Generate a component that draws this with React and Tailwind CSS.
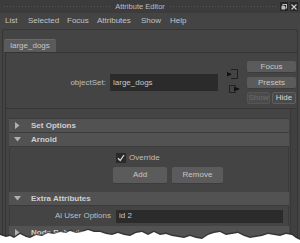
import React from "react";

const menuItems = [
  { name: "List", w: "w-[23px]" },
  { name: "Selected", w: "w-[39px]" },
  { name: "Focus", w: "w-[30px]" },
  { name: "Attributes", w: "w-[44px]" },
  { name: "Show", w: "w-[29px]" },
  { name: "Help", w: "w-[20px]" },
];

function Arrow({ open }) {
  return open ? (
    <svg width="7" height="5" viewBox="0 0 7 5" className="ml-[5px] mr-[10px]">
      <polygon points="0,0 7,0 3.5,4.5" fill="#b0b0b0" />
    </svg>
  ) : (
    <svg width="5" height="7" viewBox="0 0 5 7" className="ml-[6px] mr-[11px]">
      <polygon points="0,0 4.5,3.5 0,7" fill="#b0b0b0" />
    </svg>
  );
}

function Header({ title, open }) {
  return (
    <div className="flex h-[14px] items-center bg-[#525252] border-b border-[#3a3a3a]">
      <Arrow open={open} />
      <span className="text-[8px] font-bold text-[#cfcfcf] leading-none">{title}</span>
    </div>
  );
}

function Btn({ children, className }) {
  return (
    <div
      className={
        "flex items-center justify-center rounded-[2px] bg-[#5b5b5b] border-b border-[#3c3c3c] text-[8px] text-[#c6c6c6] leading-none " +
        className
      }
    >
      {children}
    </div>
  );
}

export default function App() {
  return (
    <div className="relative w-[300px] h-[243px] overflow-hidden bg-[#444444] font-['Liberation_Sans',sans-serif] flex flex-col">
      {/* title bar */}
      <div className="h-[13px] flex items-center bg-[#3c3c3c] pl-[3px] pr-[2px]">
        <div className="flex-1 h-[4px] bg-[radial-gradient(#575757_0.8px,transparent_0.9px)] bg-[length:3px_3px]" />
        <span className="px-[4px] text-[7.5px] text-[#bcbcbc] leading-none">Attribute Editor</span>
        <div className="flex-1 h-[4px] bg-[radial-gradient(#575757_0.8px,transparent_0.9px)] bg-[length:3px_3px] mr-[3px]" />
        <div className="w-[8px] h-[9px] bg-[#262626] flex items-center justify-center mr-[2px]">
          <svg width="6" height="6" viewBox="0 0 6 6">
            <rect x="2" y="0.5" width="3.5" height="3.5" fill="none" stroke="#bbb" strokeWidth="1" />
            <rect x="0.5" y="2" width="3.5" height="3.5" fill="#bbb" />
          </svg>
        </div>
        <div className="w-[8px] h-[9px] bg-[#262626] flex items-center justify-center">
          <svg width="6" height="6" viewBox="0 0 6 6">
            <path d="M0.5 0.5 L5.5 5.5 M5.5 0.5 L0.5 5.5" stroke="#ccc" strokeWidth="1.2" />
          </svg>
        </div>
      </div>

      {/* menu bar */}
      <div className="h-[16px] flex items-center pl-[5px] text-[8px] text-[#c2c2c2] leading-none">
        {menuItems.map((m) => (
          <span key={m.name} className={m.w}>
            {m.name}
          </span>
        ))}
      </div>

      {/* main frame */}
      <div className="flex-1 px-[2px] flex flex-col">
        <div className="flex-1 flex flex-col border-l border-t border-r border-[#363636] rounded-t-[3px]">
          {/* tab row */}
          <div className="h-[22px] flex items-end pl-[1px]">
            <div className="w-[52px] h-[13px] bg-[#5a5a5a] rounded-t-[2px] border-t border-[#676767] flex items-center justify-center text-[8px] text-[#c4c4c4] leading-none">
              large_dogs
            </div>
          </div>

          <div className="flex-1 flex flex-col ml-[2px] border-l border-t border-[#343434]">
            {/* objectSet area */}
            <div className="h-[56px] flex items-start border-b border-[#363636]">
              <div className="mt-[21px] flex items-center">
                <span className="w-[100px] text-right text-[8px] text-[#bfbfbf] leading-none">objectSet:</span>
                <div className="ml-[4px] w-[108px] h-[17px] bg-[#2b2b2b] flex items-center pl-[3px] text-[8px] text-[#c8c8c8] leading-none">
                  large_dogs
                </div>
              </div>
              <div className="ml-[9px] mt-[16px] flex flex-col w-[13px]">
                <svg width="11" height="10" viewBox="0 0 11 10">
                  <path d="M4 0.5 H10.5 V9.5 H4" fill="none" stroke="#202020" strokeWidth="1" />
                  <polygon points="0,3 5,5.2 0,7.5" fill="#111" />
                </svg>
                <svg width="12" height="8" viewBox="0 0 12 8" className="mt-[6px] ml-[2px]">
                  <path d="M7 0.5 H0.5 V7.5 H7" fill="none" stroke="#202020" strokeWidth="1" />
                  <polygon points="5,1.5 11,4 5,6.5" fill="#111" />
                </svg>
              </div>
              <div className="ml-[7px] mt-[8px] w-[49px] flex flex-col">
                <Btn className="h-[12px]">Focus</Btn>
                <Btn className="h-[12px] mt-[4px]">Presets</Btn>
                <div className="flex mt-[3px] gap-[2px]">
                  <div className="w-[23px] h-[12px] rounded-[2px] bg-[#4b4b4b] border border-[#555] flex items-center justify-center text-[8px] text-[#6c6c6c] leading-none">
                    Show
                  </div>
                  <div className="w-[24px] h-[12px] rounded-[2px] bg-[#4a4a4a] border border-[#5e5e5e] flex items-center justify-center text-[8px] text-[#d6d6d6] leading-none">
                    Hide
                  </div>
                </div>
              </div>
            </div>

            {/* sections */}
            <div className="flex-1 flex">
              <div className="flex-1 pl-[3px] pt-[9px] flex flex-col">
                <div className="border-t border-[#3a3a3a]">
                  <Header title="Set Options" />
                  <Header title="Arnold" open />
                  <div className="h-[45px] border-l border-r border-[#3a3a3a] flex flex-col">
                    <div className="mt-[6px] flex items-center pl-[106px]">
                      <div className="w-[10px] h-[10px] bg-[#2a2a2a] flex items-center justify-center">
                        <svg width="8" height="8" viewBox="0 0 8 8">
                          <path d="M1 4.2 L3.2 6.5 L7 1" fill="none" stroke="#d8d8d8" strokeWidth="1.3" />
                        </svg>
                      </div>
                      <span className="ml-[3px] text-[8px] text-[#bfbfbf] leading-none">Override</span>
                    </div>
                    <div className="mt-[4px] flex pl-[103px]">
                      <Btn className="w-[54px] h-[17px]">Add</Btn>
                      <Btn className="w-[51px] h-[17px] ml-[5px]">Remove</Btn>
                    </div>
                  </div>
                  <Header title="Extra Attributes" open />
                  <div className="h-[20px] border-l border-r border-[#3a3a3a] flex items-center">
                    <span className="w-[101px] text-right text-[8px] text-[#bfbfbf] leading-none">Ai User Options</span>
                    <div className="ml-[5px] w-[167px] h-[13px] bg-[#2b2b2b] flex items-center pl-[3px] text-[8px] text-[#c8c8c8] leading-none">
                      id 2
                    </div>
                  </div>
                  <Header title="Node Behavior" />
                </div>
              </div>
              <div className="w-[7px] ml-[1px] border-l border-[#383838] bg-[#404040]" />
            </div>
          </div>
        </div>
      </div>

      {/* torn paper edge */}
      <svg
        className="absolute left-0 bottom-0"
        width="300"
        height="16"
        viewBox="0 227 300 16"
      >
        <path
          d="M0 235 L6 237 L10 236 L14 238 L20 234 L26 237 L30 238 L36 235 L42 236 L48 233 L54 234 L60 232 L66 233 L70 231 L76 233 L82 232 L88 230 L94 232 L100 232 L106 234 L112 235 L118 233 L124 235 L130 236 L136 233 L142 232 L148 235 L154 232 L160 235 L166 234 L172 236 L178 237 L184 238 L190 236 L196 238 L202 239 L208 235 L214 233 L220 232 L226 235 L232 234 L238 233 L244 236 L250 238 L256 237 L262 236 L268 234 L274 235 L280 236 L286 234 L292 235 L296 238 L300 240 L300 243 L0 243 Z"
          fill="#1e1e1e"
          opacity="0.55"
          transform="translate(0,-1.5)"
        />
        <path
          d="M0 235 L6 237 L10 236 L14 238 L20 234 L26 237 L30 238 L36 235 L42 236 L48 233 L54 234 L60 232 L66 233 L70 231 L76 233 L82 232 L88 230 L94 232 L100 232 L106 234 L112 235 L118 233 L124 235 L130 236 L136 233 L142 232 L148 235 L154 232 L160 235 L166 234 L172 236 L178 237 L184 238 L190 236 L196 238 L202 239 L208 235 L214 233 L220 232 L226 235 L232 234 L238 233 L244 236 L250 238 L256 237 L262 236 L268 234 L274 235 L280 236 L286 234 L292 235 L296 238 L300 240 L300 243 L0 243 Z"
          fill="#ffffff"
        />
      </svg>
    </div>
  );
}
